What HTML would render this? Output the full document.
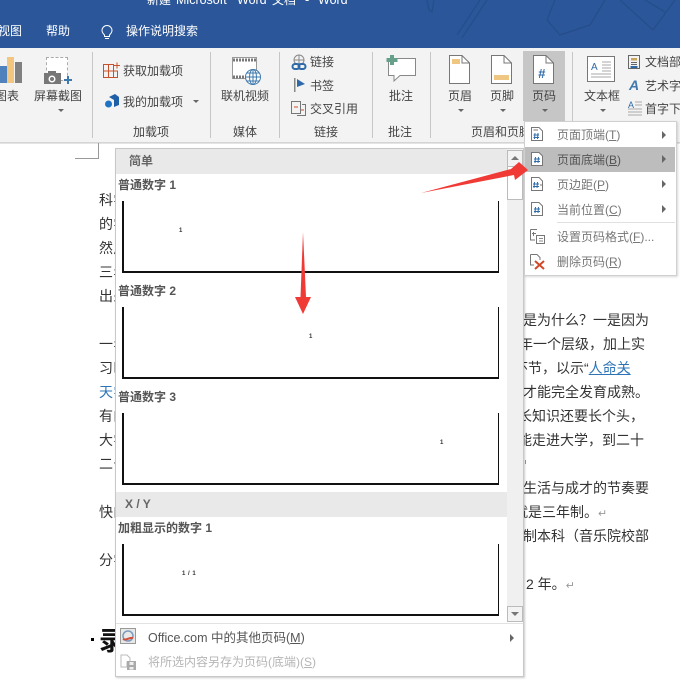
<!DOCTYPE html>
<html lang="zh"><head><meta charset="utf-8">
<style>
html,body{margin:0;padding:0;background:#fff}
#p{position:relative;width:680px;height:684px;overflow:hidden;background:#fff;font-family:"Liberation Sans","Noto Sans CJK SC",sans-serif;color:#444}
#p div,#p span.t,#p svg{position:absolute}
.t{position:absolute;white-space:nowrap;font-size:12px;line-height:16px}
.w{color:#fff}
.d{font-size:14px;line-height:20px;color:#333}
.b{font-weight:bold;color:#555;font-size:12px}
.m{color:#666}
.sep{width:1px;background:#c6c6c6;top:52px;height:86px}
.car{width:0;height:0;border-left:3px solid transparent;border-right:3px solid transparent;border-top:3px solid #666}
.ar{width:0;height:0;border-top:4px solid transparent;border-bottom:4px solid transparent;border-left:4px solid #666}
.prev{border-left:2px solid #111;border-bottom:2px solid #111;border-right:1px solid #111;box-sizing:border-box;left:122px;width:377px;background:#fff}
.n{font-size:6px;line-height:8px;color:#333;font-weight:bold}
u{text-decoration:underline}
</style></head><body>
<div id="p">
<!-- title bar -->
<div style="left:0;top:0;width:680px;height:48px;background:#2b579a"></div>
<svg style="left:400px;top:0" width="280" height="48" fill="none" stroke="#264e8c" stroke-width="1.500"><path d="M27 0L29 10L32 12L34 0M57 35L80 0M62 38L87 0M147 20L155 0M147 20L160 35L190 25L205 0M220 0L253 30M253 30L275 0M245 0L265 12"/></svg>
<span class="t w" style="left:147px;top:-8px;font-size:12px">新建</span>
<span class="t w" style="left:176px;top:-8px;font-size:12.500px">Microsoft</span>
<span class="t w" style="left:237px;top:-8px;font-size:12.500px">Word</span>
<span class="t w" style="left:272px;top:-8px;font-size:12px">文档</span>
<span class="t w" style="left:305px;top:-8px;font-size:12.500px">-</span>
<span class="t w" style="left:318px;top:-8px;font-size:12.500px">Word</span>
<span class="t w" style="left:-2px;top:23px">视图</span>
<span class="t w" style="left:46px;top:23px">帮助</span>
<svg style="left:100px;top:25px" width="14" height="16" fill="none" stroke="#fff" stroke-width="1"><path d="M4.500 10C3 8.500 2 7.500 2 5.500A5 5 0 0 1 12 5.500C12 7.500 11 8.500 9.500 10V11.500H4.500ZM5 13.500H9"/></svg>
<span class="t w" style="left:126px;top:23px">操作说明搜索</span>
<!-- ribbon -->
<div style="left:0;top:48px;width:680px;height:94px;background:#f3f3f3;border-bottom:1px solid #d4d4d4"></div>
<div class="sep" style="left:92px"></div><div class="sep" style="left:210px"></div><div class="sep" style="left:279px"></div><div class="sep" style="left:372px"></div><div class="sep" style="left:430px"></div><div class="sep" style="left:572px"></div>
<!-- chart -->
<div style="left:0;top:66px;width:7px;height:17px;background:#4f81bd"></div>
<div style="left:7px;top:57px;width:7px;height:26px;background:#f2c67f"></div>
<div style="left:15px;top:62px;width:7px;height:21px;background:#808080"></div>
<span class="t" style="left:-5px;top:88px">图表</span>
<!-- screenshot -->
<div style="left:46px;top:57px;width:22px;height:24px;border:1px dashed #aaa;box-sizing:border-box;background:#fff"></div>
<svg style="left:43px;top:70px" width="32" height="16"><rect x="1" y="3" width="17" height="11" fill="#777"/><rect x="5" y="1" width="8" height="3" fill="#777"/><circle cx="9" cy="9" r="3.500" fill="#fff"/><circle cx="9" cy="9" r="2" fill="#777"/><path d="M21 10H29M25 6V14" stroke="#3f79ad" stroke-width="2"/></svg>
<span class="t" style="left:34px;top:88px">屏幕截图</span>
<div class="car" style="left:58px;top:109px"></div>
<!-- addins -->
<svg style="left:103px;top:62px" width="18" height="16" fill="none" stroke="#c8502a"><path d="M.5 2.500H10.500V15.500H.5ZM.5 9H14.500V15.500H10.500M5.500 2.500V15.500M11 3.500H17M14 .5V6.500"/></svg>
<span class="t" style="left:123px;top:63px">获取加载项</span>
<svg style="left:104px;top:93px" width="16" height="16"><path d="M5 4L11 1L15 4V12L10 14V7Z" fill="#1f5fa8"/><circle cx="4.500" cy="11" r="3.500" fill="#1f73c4"/></svg>
<span class="t" style="left:123px;top:94px">我的加载项</span>
<div class="car" style="left:193px;top:100px"></div>
<span class="t" style="left:133px;top:124px">加载项</span>
<!-- media -->
<svg style="left:232px;top:57px" width="30" height="30" fill="none"><rect x=".5" y=".5" width="24" height="21" fill="#fff" stroke="#999"/><path d="M1 3H24M1 20H14" stroke="#777" stroke-width="3" stroke-dasharray="2 1"/><circle cx="21" cy="20" r="7.500" fill="#fff" stroke="#3f79ad"/><path d="M13.500 20H28.500M21 12.500V27.500M15 16H27M15 24H27" stroke="#3f79ad"/><ellipse cx="21" cy="20" rx="3.500" ry="7.500" stroke="#3f79ad"/></svg>
<span class="t" style="left:221px;top:88px">联机视频</span>
<span class="t" style="left:233px;top:124px">媒体</span>
<!-- links -->
<svg style="left:291px;top:54px" width="16" height="17" fill="none"><circle cx="8" cy="6" r="5" stroke="#888"/><path d="M3 6H13M8 1V11" stroke="#888"/><rect x="1.500" y="10" width="7" height="5" rx="2.500" stroke="#2e6aa8" stroke-width="2"/><rect x="7.500" y="10" width="7" height="5" rx="2.500" stroke="#2e6aa8" stroke-width="2"/></svg>
<span class="t" style="left:310px;top:54px">链接</span>
<svg style="left:293px;top:77px" width="14" height="16"><rect x="1" y="1" width="1.500" height="14" fill="#888"/><path d="M4 2L12 7L4 10Z" fill="#2e6aa8"/></svg>
<span class="t" style="left:310px;top:78px">书签</span>
<svg style="left:291px;top:100px" width="16" height="16" fill="none" stroke="#777"><path d="M.5 1.500H9.500V13.500H.5ZM11 4.500H14.500V15.500H6"/><path d="M3 7H7M10 10H13" stroke="#c8502a"/></svg>
<span class="t" style="left:310px;top:101px">交叉引用</span>
<span class="t" style="left:314px;top:124px">链接</span>
<!-- comment -->
<svg style="left:385px;top:54px" width="34" height="30"><path d="M3.500 4.500H30.500V21.500H15L9 27V21.500H3.500Z" fill="#fff" stroke="#888"/><path d="M7 1V11M1.500 6H12.500" stroke="#66a08a" stroke-width="4"/></svg>
<span class="t" style="left:389px;top:88px">批注</span>
<span class="t" style="left:388px;top:124px">批注</span>
<!-- header/footer/page -->
<svg style="left:449px;top:55px" width="22" height="30"><path d="M.5.5H13L20.500 8V28.500H.5Z" fill="#fff" stroke="#777"/><path d="M13 .5V8H20.500" fill="none" stroke="#777"/><rect x="3" y="4" width="8" height="5" fill="#efc682"/></svg>
<span class="t" style="left:448px;top:88px">页眉</span><div class="car" style="left:458px;top:109px"></div>
<svg style="left:491px;top:55px" width="22" height="30"><path d="M.5.5H13L20.500 8V28.500H.5Z" fill="#fff" stroke="#777"/><path d="M13 .5V8H20.500" fill="none" stroke="#777"/><rect x="3" y="20" width="15" height="5" fill="#efc682"/></svg>
<span class="t" style="left:490px;top:88px">页脚</span><div class="car" style="left:500px;top:109px"></div>
<div style="left:523px;top:51px;width:42px;height:70px;background:#c6c6c6"></div>
<svg style="left:533px;top:55px" width="22" height="30"><path d="M.5.5H13L20.500 8V28.500H.5Z" fill="#fff" stroke="#777"/><path d="M13 .5V8H20.500" fill="none" stroke="#777"/></svg>
<span class="t" style="left:538px;top:66px;font-size:13px;font-weight:bold;font-style:italic;color:#2e6aa8">#</span>
<span class="t" style="left:532px;top:88px">页码</span><div class="car" style="left:542px;top:109px"></div>
<span class="t" style="left:471px;top:124px">页眉和页脚</span>
<!-- textbox -->
<svg style="left:587px;top:56px" width="30" height="27"><rect x=".5" y=".5" width="27" height="25" fill="#fff" stroke="#777"/><path d="M15 6H24M15 9H24M15 12H24M15 15H24M4 18H24M4 21H24" stroke="#aaa"/></svg>
<span class="t" style="left:591px;top:60px;font-size:10px;color:#2e6aa8">A</span>
<span class="t" style="left:584px;top:88px">文本框</span><div class="car" style="left:600px;top:109px"></div>
<svg style="left:628px;top:55px" width="14" height="16" fill="none"><rect x=".5" y=".5" width="11" height="13" stroke="#666"/><rect x="3" y="3" width="6" height="2.500" fill="#c9a45a"/><path d="M3 7.500H9M3 9.500H9" stroke="#666"/><rect x="2.500" y="11" width="7" height="2" fill="#2e6aa8"/></svg>
<span class="t" style="left:645px;top:54px">文档部件</span>
<span class="t" style="left:629px;top:77px;font-size:14px;font-weight:bold;font-style:italic;color:#3f79ad">A</span>
<span class="t" style="left:645px;top:78px">艺术字</span>
<span class="t" style="left:628px;top:97px;font-size:9px;color:#2e6aa8">A</span>
<svg style="left:626px;top:100px" width="17" height="16"><path d="M9 2H16M9 5H16M2 9H16M2 12H16M2 15H16" stroke="#aaa"/></svg>
<span class="t" style="left:645px;top:101px">首字下沉</span>
<!-- doc -->
<div style="left:0;top:143px;width:680px;height:1px;background:#e4e4e4"></div>
<div style="left:98px;top:143px;width:1px;height:15px;background:#999"></div>
<div style="left:75px;top:158px;width:24px;height:1px;background:#999"></div>
<span class="t d" style="left:99px;top:190px;letter-spacing:0.500px">科学</span>
<span class="t d" style="left:99px;top:214px;letter-spacing:0.500px">的学</span>
<span class="t d" style="left:99px;top:238px;letter-spacing:0.500px">然后</span>
<span class="t d" style="left:99px;top:262px;letter-spacing:0.500px">三年</span>
<span class="t d" style="left:99px;top:286px;letter-spacing:0.500px">出来</span>
<span class="t d" style="left:99px;top:334px;letter-spacing:0.500px">一年</span>
<span class="t d" style="left:99px;top:358px;letter-spacing:0.500px">习时</span>
<span class="t d" style="left:99px;top:382px;color:#2e74b5;letter-spacing:0.500px">天学</span>
<span class="t d" style="left:99px;top:406px;letter-spacing:0.500px">有的</span>
<span class="t d" style="left:99px;top:430px;letter-spacing:0.500px">大学</span>
<span class="t d" style="left:99px;top:454px;letter-spacing:0.500px">二十</span>
<span class="t d" style="left:99px;top:502px;letter-spacing:0.500px">快的</span>
<span class="t d" style="left:99px;top:550px;letter-spacing:0.500px">分学</span>
<span class="t d" style="left:523px;top:310px">是为什么？一是因为</span>
<span class="t d" style="left:519px;top:334px">年一个层级，加上实</span>
<span class="t d" style="left:514px;top:358px">环节，以示“<u style="color:#2e74b5">人命关</u></span>
<span class="t d" style="left:523px;top:382px">才能完全发育成熟。</span>
<span class="t d" style="left:518px;top:406px">长知识还要长个头，</span>
<span class="t d" style="left:518px;top:430px">能走进大学，到二十</span>
<div style="left:525px;top:460px;width:1px;height:4px;background:#999"></div>
<span class="t d" style="left:523px;top:478px">生活与成才的节奏要</span>
<span class="t d" style="left:514px;top:502px">就是三年制。<span style="color:#999;font-size:11px">↵</span></span>
<span class="t d" style="left:523px;top:526px">制本科（音乐院校部</span>
<span class="t d" style="left:526px;top:574px">2 年。<span style="color:#999;font-size:11px">↵</span></span>
<div style="left:91px;top:638px;width:3px;height:3px;background:#000"></div>
<span class="t" style="left:99px;top:624px;font-size:26px;line-height:34px;font-weight:bold;color:#111">录</span>
<!-- big gallery -->
<div style="left:115px;top:148px;width:409px;height:529px;background:#fff;border:1px solid #c8c8c8;box-sizing:border-box;box-shadow:1px 1px 2px rgba(0,0,0,.2)"></div>
<div style="left:116px;top:149px;width:391px;height:25px;background:#e9e9e9"></div>
<span class="t b" style="left:129px;top:153px;color:#666">简单</span>
<span class="t b" style="left:118px;top:177px">普通数字 1</span>
<div class="prev" style="top:201px;height:72px"></div>
<span class="t n" style="left:179px;top:227px">1</span>
<span class="t b" style="left:118px;top:283px">普通数字 2</span>
<div class="prev" style="top:307px;height:72px"></div>
<span class="t n" style="left:309px;top:333px">1</span>
<span class="t b" style="left:118px;top:389px">普通数字 3</span>
<div class="prev" style="top:413px;height:72px"></div>
<span class="t n" style="left:440px;top:439px">1</span>
<div style="left:116px;top:492px;width:391px;height:25px;background:#e9e9e9"></div>
<span class="t b" style="left:125px;top:496px;color:#666">X / Y</span>
<span class="t b" style="left:118px;top:520px">加粗显示的数字 1</span>
<div class="prev" style="top:544px;height:72px"></div>
<span class="t n" style="left:182px;top:570px;letter-spacing:.5px">1 / 1</span>
<!-- scrollbar -->
<div style="left:507px;top:149px;width:16px;height:473px;background:#f0f0f0"></div>
<div style="left:507px;top:150px;width:16px;height:50px;background:#fff;border:1px solid #bbb;box-sizing:border-box"></div>
<div style="left:507px;top:150px;width:16px;height:17px;background:#f3f3f3;border:1px solid #bbb;box-sizing:border-box"></div>
<div style="left:511px;top:156px;width:0;height:0;border-left:4px solid transparent;border-right:4px solid transparent;border-bottom:4px solid #777"></div>
<div style="left:507px;top:606px;width:16px;height:16px;background:#f3f3f3;border:1px solid #bbb;box-sizing:border-box"></div>
<div style="left:511px;top:612px;width:0;height:0;border-left:4px solid transparent;border-right:4px solid transparent;border-top:4px solid #777"></div>
<div style="left:116px;top:623px;width:407px;height:1px;background:#e2e2e2"></div>
<svg style="left:120px;top:628px" width="17" height="17" fill="none"><rect x=".5" y=".5" width="15" height="15" fill="#e8e8e8" stroke="#999"/><circle cx="8" cy="8" r="5" stroke="#7a9abc" stroke-width="1.500"/><path d="M3 11C6 13 9 9 13 10" stroke="#d0503a" stroke-width="2"/></svg>
<span class="t" style="left:148px;top:630px;font-size:12.500px;color:#555">Office.com 中的其他页码(<u>M</u>)</span>
<div class="ar" style="left:510px;top:634px"></div>
<svg style="left:120px;top:654px" width="17" height="16"><path d="M1 1H7L10 4V8H7V13H1Z" fill="#fff" stroke="#bbb"/><rect x="7" y="7" width="9" height="9" fill="#aaa"/><rect x="9.500" y="8" width="4" height="3" fill="#eee"/><rect x="9.500" y="13" width="4" height="2.500" fill="#eee"/></svg>
<span class="t" style="left:148px;top:654px;color:#b5b5b5">将所选内容另存为页码(底端)(<u>S</u>)</span>
<!-- small menu -->
<div style="left:524px;top:121px;width:153px;height:155px;background:#fff;border:1px solid #d0d0d0;box-sizing:border-box;box-shadow:1px 1px 2px rgba(0,0,0,.15)"></div>
<div style="left:525px;top:147px;width:150px;height:25px;background:#bdbdbd"></div>
<svg style="left:531px;top:127px" width="13" height="15" fill="none"><path d="M.5.5H8L11.500 4V13.500H.5Z" fill="#fff" stroke="#777"/><path d="M2.500 3H7" stroke="#777"/><path d="M4 6L3.500 12M7 6L6.500 12M2.500 8H8M2.500 10.500H8" stroke="#2e6aa8"/></svg>
<svg style="left:531px;top:152px" width="13" height="15" fill="none"><path d="M.5.5H8L11.500 4V13.500H.5Z" fill="#fff" stroke="#777"/><path d="M4.500 5L4 11M7.500 5L7 11M3 7H9M3 9.500H9" stroke="#2e6aa8"/></svg>
<svg style="left:531px;top:177px" width="13" height="15" fill="none"><path d="M.5.5H8L11.500 4V13.500H.5Z" fill="#fff" stroke="#777"/><path d="M3.500 5L3 11M6.500 5L6 11M2 7H8M2 9.500H8" stroke="#2e6aa8"/><path d="M10 7V9" stroke="#777"/></svg>
<svg style="left:531px;top:202px" width="13" height="15" fill="none"><path d="M.5.5H8L11.500 4V13.500H.5Z" fill="#fff" stroke="#777"/><path d="M4.500 5L4 11M7.500 5L7 11M3 7H9M3 9.500H9" stroke="#2e6aa8"/></svg>
<span class="t" style="left:557px;top:127px;color:#777">页面顶端(<u>T</u>)</span>
<span class="t" style="left:557px;top:152px;color:#555">页面底端(<u>B</u>)</span>
<span class="t" style="left:557px;top:177px;color:#777">页边距(<u>P</u>)</span>
<span class="t" style="left:557px;top:202px;color:#777">当前位置(<u>C</u>)</span>
<div class="ar" style="left:662px;top:131px"></div><div class="ar" style="left:662px;top:155px"></div><div class="ar" style="left:662px;top:180px"></div><div class="ar" style="left:662px;top:205px"></div>
<div style="left:557px;top:222px;width:118px;height:1px;background:#e0e0e0"></div>
<svg style="left:530px;top:229px" width="16" height="16" fill="none"><path d="M.5.5H7M.5.5V11H5" stroke="#777"/><path d="M2 4.500H6M3.500 3V7" stroke="#777"/><rect x="6.500" y="6.500" width="8" height="8" fill="#fff" stroke="#777"/><path d="M9 9.500H13M9 12H13" stroke="#888"/></svg>
<svg style="left:530px;top:254px" width="16" height="16" fill="none"><path d="M.5.5H7L10 3.500V6M.5.5V11H4" stroke="#777"/><path d="M5 7L14 15M14 7L5 15" stroke="#d2492a" stroke-width="2"/></svg>
<span class="t" style="left:557px;top:229px;color:#777">设置页码格式(<u>F</u>)...</span>
<span class="t" style="left:557px;top:254px;color:#777">删除页码(<u>R</u>)</span>
<!-- arrows -->
<svg style="left:0;top:0" width="680" height="684"><path d="M421 193L511 169L519 162L528 170L515 180L514 175Z" fill="#f03a36"/><path d="M303 232L306 297L311 297L303 314L295 297L300.500 297Z" fill="#f03a36"/></svg>
</div>
</body></html>
